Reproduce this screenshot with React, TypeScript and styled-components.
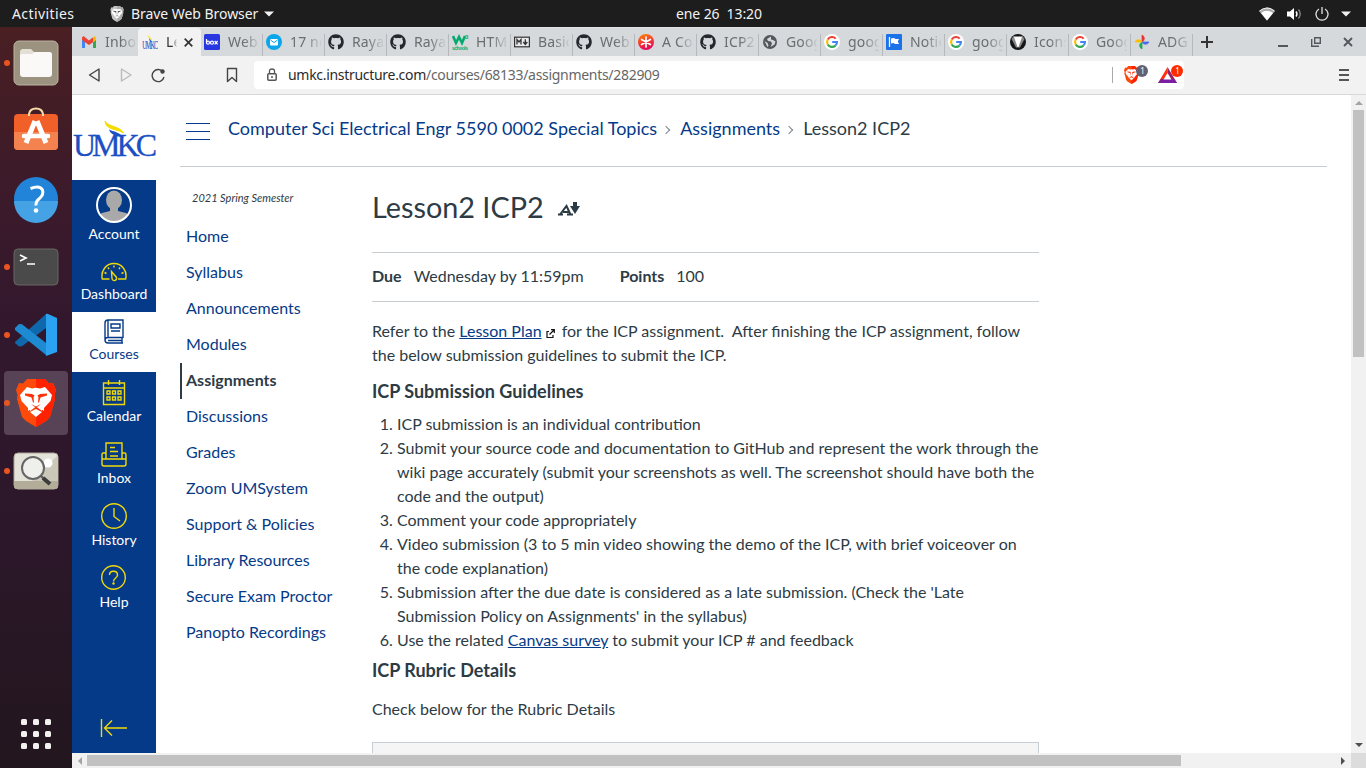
import React from 'react';
import styled, { createGlobalStyle } from 'styled-components';
import { FaGithub } from 'react-icons/fa';

const Global = createGlobalStyle`
  * { box-sizing: border-box; }
  html, body { margin: 0; height: 100%; overflow: hidden; }
  body { font-family: Lato, "Liberation Sans", sans-serif; color: #2d3b45; font-size: 16px; line-height: 24px; }
  svg { display: block; flex: none; }
`;

const Desktop = styled.div`
  width: 1366px; height: 768px; display: flex; flex-direction: column; overflow: hidden; background: #fff;
`;
const TopBar = styled.header`
  height: 27px; flex: none; background: #1d1d1d; color: #f2f2f2; display: flex; align-items: center;
  font: 14px/27px "Noto Sans", sans-serif; white-space: pre;
`;
const BarText = styled.span<{ $w: number; $ml: number; $ls?: number }>`
  width: ${p => p.$w}px; margin-left: ${p => p.$ml}px; letter-spacing: ${p => p.$ls ?? 0}px; flex: none;
`;
const Tray = styled.div`
  display: flex; align-items: center; margin-left: auto; gap: 12px; padding-right: 15px;
`;
const Body = styled.div`display: flex; flex: 1; min-height: 0;`;

const Dock = styled.aside`
  width: 72px; flex: none; display: flex; flex-direction: column; padding: 4px 4px 0;
  background: linear-gradient(#491f22 0, #3b1a2b 180px, #33182d 290px, #2c172a 500px, #22161e 741px);
`;
const DockItem = styled.div<{ $active?: boolean }>`
  height: 64px; margin: 0 0 4px; flex: none; border-radius: 4px; display: flex; align-items: center;
  background: ${p => (p.$active ? '#574355' : 'transparent')};
`;
const Dot = styled.i<{ $on?: boolean }>`
  width: 6px; height: 6px; border-radius: 3px; background: ${p => (p.$on ? '#e95420' : 'transparent')};
  margin-right: 2px; flex: none;
`;
const AppGrid = styled.div`
  margin: auto auto 19px; display: grid; grid-template-columns: repeat(3, 6px); gap: 6px;
  i { height: 6px; border-radius: 1.5px; background: #f3f1ef; }
`;

const Browser = styled.main`flex: 1; min-width: 0; display: flex; flex-direction: column;`;
const TabStrip = styled.div`
  height: 29px; flex: none; background: #d5d9dc; display: flex; align-items: stretch; padding-left: 6px; border-top: 1px solid #e0e3e5;
`;
const Tab = styled.div<{ $w: number; $active?: boolean; $line?: boolean }>`
  width: ${p => p.$w}px; flex: none; display: flex; align-items: center; position: relative;
  padding-left: ${p => (p.$active ? 4 : 3)}px;
  background: ${p => (p.$active ? '#f2f2f2' : 'transparent')}; border-radius: 4px 4px 0 0;
  &::after { content: ''; position: absolute; right: 0; top: 6px; bottom: 0; width: 1px; background: ${p => (p.$line ? '#b5b9bc' : 'transparent')}; }
`;
const TabIcon = styled.span`width: 16px; height: 16px; flex: none; display: flex; align-items: center; justify-content: center;`;
const TabTitle = styled.span<{ $active?: boolean }>`
  margin-left: 8px; width: ${p => (p.$active ? 11 : 31)}px; overflow: hidden; white-space: nowrap; font: 14px/20px "Noto Sans", sans-serif;
  letter-spacing: 0.15px; color: ${p => (p.$active ? '#333' : '#6b6d70')};
  mask-image: linear-gradient(90deg, #000 50%, transparent 105%);
`;
const CloseMark = styled.svg`margin-left: 7px;`;
const NewTab = styled.svg`margin: 8px 0 0 8px;`;
const WindowButtons = styled.div`margin-left: auto; padding-right: 13px; display: flex; align-items: center; gap: 22.5px;`;
const Toolbar = styled.div`
  height: 39px; flex: none; background: #f2f2f2; border-bottom: 1px solid #d5d9dc; display: flex; align-items: center;
  justify-content: space-between; padding: 0 17px 0 15px;
`;
const AddressGroup = styled.div`display: flex; align-items: center; gap: 11px;`;
const Address = styled.div`
  width: 930px; height: 28px; border-radius: 4px; background: #fff; display: flex; align-items: center;
  padding-left: 12px; color: #666; font: 14px/28px "Noto Sans", sans-serif; letter-spacing: -0.3px;
  b { font-weight: 400; color: #2b2b2b; }
`;
const Url = styled.span`margin-left: 10px; flex: 1; white-space: nowrap;`;
const Shields = styled.div`height: 28px; display: flex; align-items: center; gap: 10px; padding-right: 0;`;
const Rule = styled.i`width: 1px; height: 16px; background: #aaa; margin-right: 1px;`;

const Viewport = styled.div`flex: 1; min-height: 0; display: grid; grid-template: minmax(0, 1fr) 15px / minmax(0, 1fr) 15px;`;
const Page = styled.div`display: flex; overflow: hidden; min-height: 0; background: #fff;`;
const GlobalNav = styled.nav`width: 84px; flex: none; background: #053a88; display: flex; flex-direction: column; color: #fff;`;
const LogoBox = styled.div`height: 85px; flex: none; background: #fff; padding-top: 25px;`;
const NavItem = styled.a<{ $h: number; $active?: boolean }>`
  height: ${p => p.$h}px; flex: none; display: flex; flex-direction: column; align-items: center; justify-content: flex-end;
  font-size: 14px; line-height: 18px; padding-bottom: 9px; gap: 1px;
  color: ${p => (p.$active ? '#053a88' : '#fff')}; background: ${p => (p.$active ? '#fff' : 'transparent')};
  svg { color: ${p => (p.$active ? '#053a88' : '#f0d90a')}; }
`;
const Collapse = styled.div`margin: auto auto 15px 28px; color: #f0d90a;`;

const Content = styled.div`flex: 1; min-width: 0; padding: 0 24px;`;
const Crumbs = styled.div`
  height: 72px; border-bottom: 1px solid #c7cdd1; display: flex; align-items: center; padding: 0 0 6px 6px;
  font-size: 18px; white-space: nowrap; color: #2d3b45;
  a { color: #053a88; }
`;
const Burger = styled.div`
  width: 24px; height: 17px; margin: 8px 18px 0 0; border: solid #053a88; border-width: 1px 0; display: flex; align-items: center;
  &::before { content: ''; flex: 1; height: 1px; background: #053a88; }
`;
const Chevron = styled.i`
  width: 6px; height: 6px; border: solid #7b858c; border-width: 1px 1px 0 0; transform: rotate(45deg); margin: 5px 11px 0 6px;
`;
const Columns = styled.div`display: flex;`;
const CourseNav = styled.nav`width: 192px; flex: none; padding-top: 22px;`;
const Term = styled.div`font-size: 11px; font-style: italic; line-height: 18px; padding-left: 12px; margin-bottom: 15px;`;
const CourseLink = styled.a<{ $active?: boolean }>`
  display: block; height: 36px; line-height: 28px; padding-left: 6px; color: #053a88;
  ${p => p.$active && 'color: #2d3b45; font-weight: 700; box-shadow: inset 2px 0 #2d3b45; margin: -3px 0 3px; line-height: 34px;'}
`;
const Article = styled.article`width: 667px; flex: none;`;
const Title = styled.h1`
  margin: 0; height: 85px; padding-top: 21px; font-size: 28.8px; line-height: 38px; font-weight: 400; display: flex; gap: 14px;
  svg { margin-top: 14px; }
`;
const Details = styled.div`
  height: 50px; border: solid #c7cdd1; border-width: 1px 0; display: flex; align-items: center; line-height: 24px; padding-bottom: 2px;
  b { margin-right: 12px; }
  span { margin-right: 36px; }
`;
const Para = styled.p<{ $mt: number }>`
  margin: ${p => p.$mt}px 0 0; white-space: nowrap;
  a { color: #053a88; text-decoration: underline; }
  svg { display: inline-block; margin: 0 3px 0 4px; vertical-align: -1px; }
`;
const Heading = styled.h2<{ $mt: number }>`margin: ${p => p.$mt}px 0 0; font-size: 18px; line-height: 24px; font-weight: 700;`;
const Steps = styled.ol`
  margin: 9px 0 0; padding: 0 0 0 25px; white-space: nowrap;
  a { color: #053a88; text-decoration: underline; }
`;
const RubricBox = styled.div`margin-top: 21px; height: 60px; border: 1px solid #c7cdd1; background: #f5f5f5;`;

const VScroll = styled.div`background: #f1f1f1; display: flex; flex-direction: column; align-items: center; justify-content: space-between; padding: 4px 0;`;
const VThumb = styled.i`width: 11px; height: 247px; background: #c1c1c1; margin-top: 3px; margin-bottom: auto;`;
const HScroll = styled.div`background: #f1f1f1; display: flex; align-items: center; justify-content: space-between; padding: 0 4px;`;
const HThumb = styled.i`width: 1094px; height: 11px; background: #c1c1c1; margin-left: 3px; margin-right: auto;`;
const Corner = styled.i`background: #dcdcdc;`;

const Arrow = ({ d, c = '#505050' }: { d: string; c?: string }) => (
  <svg width="8" height="8" viewBox="0 0 8 8"><path d={d} fill={c} /></svg>
);

const Lion = ({ w, h, mono }: { w: number; h: number; mono?: boolean }) => {
  const ink = mono ? '#555' : '#fc3209';
  return (
    <svg width={w} height={h} viewBox="0 0 40 48">
      <path d="M11 0h18l4 4.500 4-.5 3 7-1.500 5 .5 4-5 18-4 4-10 6-10-6-4-4-5-18 .5-4L0 11l3-7 4 .5z" fill={mono ? '#c4c4c4' : '#fd4a0b'} />
      <path d="M20 0h9l4 4.500 4-.5 3 7-1.500 5 .5 4-5 18-4 4-10 6z" fill={mono ? '#aaa' : '#ff2200'} />
      <path d="M11 8l5 1.500 4-.8 4 .8L29 8l7 8-1.500 6-6.500 7 0 3-8-5-8 5 0-3-6.500-7L4 16z" fill="#fff" />
      <path d="M9 14.500l7 .5 2.500 1.500-1 2 .5 5h-1l-1.500-5L9 16.500zM31 14.500l-7 .5-2.500 1.500 1 2-.5 5h1l1.500-5L31 16.500zM15 25l5 2.500 5-2.500-5 4zM19 27h2v4h-2z" fill={ink} />
      <path d="M20 27.500l-6 4.500 0-3zM20 27.500l6 4.500 0-3z" fill="#fff" />
      <path d="M14 33l6-3 6 3-6 5z" fill="#fff" />
    </svg>
  );
};

const Umkc = ({ w, h }: { w: number; h: number }) => (
  <svg width={w} height={h} viewBox="0 0 84 38" preserveAspectRatio="none">
    <g fontFamily="Liberation Serif, serif" fontSize="32" fill="#1b4fc4" stroke="#1b4fc4" strokeWidth=".3">
      <text x="1" y="36" textLength="84" lengthAdjust="spacing">UMKC</text>
    </g>
    <path d="M33 1c3 6 15 5 18.500 12C45 8.500 34 10.500 33 1z" fill="#f5dc00" stroke="#f5dc00" />
    <path d="M37 9.500c4 2 12 3 15 8.500-6-3-13-1.500-15-8.500z" fill="#1b4fc4" />
  </svg>
);

const Google = () => (
  <svg width="16" height="16" viewBox="0 0 16 16"><circle cx="8" cy="8" r="8" fill="#fff" />
    <g fill="none" strokeWidth="2.1">
      <path d="M11.7 4.600A5 5 0 0 0 3.700 5.600" stroke="#ea4335" /><path d="M3.700 5.600a5 5 0 0 0 0 4.800" stroke="#fbbc05" />
      <path d="M3.700 10.400a5 5 0 0 0 7.700 1.200" stroke="#34a853" /><path d="M11.400 11.600A5 5 0 0 0 13 8H8.200" stroke="#4285f4" />
    </g>
  </svg>
);
const Git = () => <FaGithub size={16} color="#24292e" />;
const Gmail = () => (
  <svg width="16" height="16" viewBox="0 0 16 16">
    <path d="M1 14V4l3 2v8z" fill="#4285f4" /><path d="M15 14V4l-3 2v8z" fill="#34a853" /><path d="M12 3.500l1.500-1.200L15 3v3l-3 2.500z" fill="#fbbc04" />
    <path d="M1 3.500L2.500 2 8 6.500 12 3.300v5L8 11 4 8.200 1 6z" fill="#ea4335" />
  </svg>
);
const Box = () => (
  <svg width="16" height="16" viewBox="0 0 16 16"><rect width="16" height="16" rx="1.500" fill="#2838e0" />
    <path d="M2.500 5v4.200" stroke="#fff" strokeWidth="1.200" /><g fill="none" stroke="#fff" strokeWidth="1.200"><circle cx="4" cy="8.700" r="1.500" /><circle cx="8" cy="8.700" r="1.500" /><path d="M10.600 7l3 3.400M13.600 7l-3 3.400" /></g></svg>
);
const Mail = () => (
  <svg width="16" height="16" viewBox="0 0 16 16"><circle cx="8" cy="8" r="8" fill="#0ba5e9" /><rect x="4" y="5" width="8" height="6.400" rx="1" fill="#fff" /><path d="M4.500 6L8 8.600 11.500 6" stroke="#0ba5e9" fill="none" /></svg>
);
const W3 = () => (
  <svg width="17" height="17" viewBox="0 0 17 17"><path d="M1 2l3 7 3-6 3 6 3-7" fill="none" stroke="#04aa6d" strokeWidth="2.600" />
    <text x="13" y="5" fontSize="6" fontWeight="700" fill="#04aa6d" fontFamily="Liberation Sans">3</text>
    <text x="0" y="16" fontSize="5" fontWeight="700" fill="#04aa6d" fontFamily="Liberation Sans" textLength="16">schools</text></svg>
);
const Markdown = () => (
  <svg width="16" height="12" viewBox="0 0 16 12"><rect x=".6" y="1.200" width="14.800" height="9.600" fill="#e9ebec" stroke="#333" strokeWidth="1.200" /><path d="M3 8.500v-5l2 2.500 2-2.500v5M11.300 3.200v5M9.300 6l2 2.400 2-2.400" fill="none" stroke="#333" strokeWidth="1.300" /></svg>
);
const Aster = () => (
  <svg width="16" height="16" viewBox="0 0 16 16"><defs><linearGradient id="as" x2=".3" y2="1"><stop stopColor="#ff8a00" /><stop offset=".5" stopColor="#f5412c" /><stop offset="1" stopColor="#e5095a" /></linearGradient></defs>
    <circle cx="8" cy="8" r="8" fill="url(#as)" /><path d="M8 3v10M3.600 5.500l8.800 5M12.400 5.500l-8.800 5" stroke="#fff" strokeWidth="1.700" strokeLinecap="round" /></svg>
);
const Globe = () => (
  <svg width="16" height="16" viewBox="0 0 16 16"><circle cx="8" cy="8" r="7" fill="#54585c" /><path d="M9 2.500l-4 2.500 1 2 3 .5 1 2-1.500 3.500 4-2.500 1-3-2.500-1.500-2-.5zM2.500 7l3 2 1 2.500-1 1.500z" fill="#d5d9dc" /></svg>
);
const Flag = () => (
  <svg width="16" height="16" viewBox="0 0 16 16"><rect width="16" height="16" rx="1" fill="#1a73e8" /><path d="M3.500 3v10" stroke="#fff" strokeWidth="1.300" /><path d="M5 4.500l3-.5 1.500 1H13l-1.200 2.500L13 10H9L7.500 9 5 9.500z" fill="#fff" /></svg>
);
const Vee = () => (
  <svg width="16" height="16" viewBox="0 0 16 16"><circle cx="8" cy="8" r="8" fill="#161616" /><path d="M3.500 2h9L14.500 5l-4.500 8.500H6L1.500 5z" fill="#888" /><path d="M4 3h8l-3.500 10h-1z" fill="#fff" /></svg>
);
const Photos = () => (
  <svg width="16" height="16" viewBox="0 0 16 16"><path d="M8 8V1a3.800 3.800 0 0 1 0 7z" fill="#ea3335" stroke="#ea3335" strokeWidth=".8" /><path d="M8 8h7a3.800 3.800 0 0 1-7 0z" fill="#4a6cf0" stroke="#4a6cf0" strokeWidth=".8" /><path d="M8 8v7a3.800 3.800 0 0 1 0-7z" fill="#20a955" stroke="#20a955" strokeWidth=".8" /><path d="M8 8H1a3.800 3.800 0 0 1 7 0z" fill="#fbbc04" stroke="#fbbc04" strokeWidth=".8" /></svg>
);

const tabs: { t: string; i: React.ReactNode; w?: number; active?: boolean }[] = [
  { t: 'Inbox', i: <Gmail />, w: 60 },
  { t: 'Lesson', i: <Umkc w={16} h={15} />, w: 63, active: true },
  { t: 'Web', i: <Box /> },
  { t: '17 new', i: <Mail /> },
  { t: 'Rayap', i: <Git /> },
  { t: 'Rayap', i: <Git /> },
  { t: 'HTML', i: <W3 /> },
  { t: 'Basic', i: <Markdown /> },
  { t: 'Web', i: <Git /> },
  { t: 'A Col', i: <Aster /> },
  { t: 'ICP2', i: <Git /> },
  { t: 'Goog', i: <Globe /> },
  { t: 'goog', i: <Google /> },
  { t: 'Notic', i: <Flag /> },
  { t: 'goog', i: <Google /> },
  { t: 'Icons', i: <Vee /> },
  { t: 'Goog', i: <Google /> },
  { t: 'ADG', i: <Photos /> },
];

const dock: { i: React.ReactNode; on?: boolean; active?: boolean }[] = [
  { on: true, i: <svg width="48" height="48" viewBox="0 0 48 48"><rect x="2" y="2" width="44" height="44" rx="5" fill="#9b937f" stroke="#bbb4a2" /><path d="M8 13q0-3 3-3h8l3 3h15q3 0 3 3v5H8z" fill="#e3dfd5" /><path d="M8 17q0-2 2-2h10l3-2h14q3 0 3 3v19q0 3-3 3H11q-3 0-3-3z" fill="#faf9f8" /></svg> },
  { i: <svg width="48" height="48" viewBox="0 0 48 48"><rect x="2" y="7" width="44" height="36" rx="4" fill="#f2602a" /><path d="M2 25h44v14q0 4-4 4H6q-4 0-4-4z" fill="#f3824f" /><path d="M17 9V7q1-5.500 7-5.500T31 7v2" fill="none" stroke="#f7dba8" strokeWidth="2" /><path d="M23 14L14 36M25 14l9 22" stroke="#fff" strokeWidth="5" fill="none" /><path d="M12 29h24" stroke="#fff" strokeWidth="4.500" strokeLinecap="round" /></svg> },
  { i: <svg width="48" height="48" viewBox="0 0 48 48"><circle cx="24" cy="24" r="22" fill="#2284d8" /><path d="M2 26h44a22 22 0 0 1-44 0z" fill="#45a3e5" /><path d="M18.500 13.500q9.500-3.500 12 1.500 1.500 4.500-3 8.500-4 3-3.500 7" fill="none" stroke="#fff" strokeWidth="3" /><circle cx="24" cy="35.500" r="2.300" fill="#fff" /></svg> },
  { on: true, i: <svg width="48" height="48" viewBox="0 0 48 48"><rect x="2" y="6" width="44" height="36" rx="4" fill="#4a4a4a" stroke="#686662" /><path d="M8 12l6 3-6 3M15 21h8" fill="none" stroke="#fff" strokeWidth="1.700" /></svg> },
  { on: true, i: <svg width="48" height="48" viewBox="0 0 48 48"><path d="M34 3L3 31v1l4 3.500 3-.3L34 17z" fill="#0f68ab" /><path d="M3 17l4-4 3 .3 24 18.700v12L3 19z" fill="#1e8ad1" /><path d="M34 3q1-.5 2 0l9 4v34l-11 4z" fill="#2aa2f0" /></svg> },
  { on: true, active: true, i: <svg width="48" height="48" viewBox="-4 0 48 48"><Lion w={40} h={48} /></svg> },
  { on: true, i: <svg width="48" height="48" viewBox="0 0 48 48"><rect x="2" y="6" width="44" height="36" rx="4" fill="#e4e3da" stroke="#aaa798" /><path d="M20 34L46 8v26z" fill="#cbc8ba" /><path d="M2 34h44v5q0 3-3 3H5q-3 0-3-3z" fill="#b3ac98" /><circle cx="36" cy="16" r="4.500" fill="#fff" /><circle cx="21" cy="21" r="11" fill="#f1f1ee" fillOpacity=".85" stroke="#666" strokeWidth="2" /><path d="M29 29l3 3" stroke="#555" strokeWidth="2" /><path d="M31 31l7 6" stroke="#3c3c3c" strokeWidth="4" /></svg> },
];

const stroke = { fill: 'none', stroke: 'currentColor', strokeWidth: 1.4 };
const navItems: { t: string; h: number; active?: boolean; i: React.ReactNode }[] = [
  { t: 'Account', h: 72, i: <svg width="36" height="37" viewBox="0 0 36 37"><defs><clipPath id="av"><circle cx="18" cy="18" r="17" /></clipPath></defs><circle cx="18" cy="18" r="17" fill="#053a88" /><g clipPath="url(#av)" fill="#a9a9a9"><ellipse cx="18" cy="13" rx="8" ry="9.500" /><path d="M14 20h8v4l8 2 4 3v8H2v-8l4-3 8-2z" /></g><circle cx="18" cy="18" r="17" fill="none" stroke="#fff" strokeWidth="2" /></svg> },
  { t: 'Dashboard', h: 60, i: <svg width="26" height="22" viewBox="0 0 26 22"><g {...stroke}><path d="M8.500 17H1.300C-.5 9 5 1.500 13 1.500S26.500 9 24.700 17H17" /><path d="M10.500 9.500l4.700 5.500a2.300 2.300 0 1 1-4.200 1.500z" /><path d="M13 3.500v2M7 5.500l1 1.500M19 5.500l-1 1.500M3.500 10.500l2 1M22.500 10.500l-2 1" /></g></svg> },
  { t: 'Courses', h: 60, active: true, i: <svg width="20" height="25" viewBox="0 0 20 25"><g {...stroke}><path d="M19 19V1H4Q1 1 1 4v17q0 3 3 3h15M1 21q0-2.500 3-2.500h15M4 1v17M4 21.500h14M7 5h9v4H7zM7 12h9M18 19v5" /></g></svg> },
  { t: 'Calendar', h: 62, i: <svg width="24" height="27" viewBox="0 0 24 27"><g {...stroke}><path d="M1.500 4h21v21.500h-21zM1.500 9h21M6.500 1v5M17.500 1v5" /><path d="M5 12h3v3H5zM10.500 12h3v3h-3zM16 12h3v3h-3zM5 18h3v3H5zM10.500 18h3v3h-3zM16 18h3v3h-3z" /></g></svg> },
  { t: 'Inbox', h: 62, i: <svg width="26" height="26" viewBox="0 0 26 26"><g {...stroke}><path d="M5 17V1h16v16M5 11H2q-1 0-1 2v9q0 2 2 2h20q2 0 2-2v-9q0-2-1-2h-3M1 17h24M9 5.500h5M9 9.500h8M9 14h8" /></g></svg> },
  { t: 'History', h: 62, i: <svg width="26" height="27" viewBox="0 0 26 27"><g {...stroke}><circle cx="13" cy="13" r="12.300" /><path d="M13 5v8.500l6 4.500" /></g></svg> },
  { t: 'Help', h: 62, i: <svg width="26" height="27" viewBox="0 0 26 27"><g {...stroke}><circle cx="12.500" cy="12.500" r="11.800" /><path d="M8.500 10c0-5 8-5 8 0 0 3-4 3-4 6.500" /></g><circle cx="12.500" cy="18.500" r="1.200" fill="currentColor" /></svg> },
];

const links = ['Home', 'Syllabus', 'Announcements', 'Modules', 'Assignments', 'Discussions', 'Grades', 'Zoom UMSystem', 'Support & Policies', 'Library Resources', 'Secure Exam Proctor', 'Panopto Recordings'];

export default function App() {
  return (
    <Desktop>
      <Global />
      <TopBar>
        <BarText $w={88} $ml={12} $ls={0.4}>Activities</BarText>
        <svg width="34" height="16" viewBox="-10 0 34 16"><Lion w={14} h={16} mono /></svg>
        <BarText $w={128} $ml={-3} $ls={-0.05}>Brave Web Browser</BarText>
        <svg width="15" height="6" viewBox="-5 0 15 6"><path d="M0 .5h10L5 5.500z" fill="#f2f2f2" /></svg>
        <BarText $w={100} $ml={402} $ls={-0.1}>ene 26  13:20</BarText>
        <Tray>
          <svg width="16" height="14" viewBox="0 0 16 14"><path d="M0 4q8-7 16 0L8 13.500z" fill="#aaa" /><path d="M2 6q6-4.500 12 0L8 13.500z" fill="#fff" /><path d="M.5 4q7.500-6 15 0" fill="none" stroke="#eee" /></svg>
          <svg width="16" height="14" viewBox="0 0 16 14"><path d="M0 4.500h3L7 1v12L3 9.500H0z" fill="#fff" /><path d="M9 4.500q2 2.500 0 5" stroke="#fff" strokeWidth="1.400" fill="none" /><path d="M11.500 2.500q3.500 4.500 0 9" stroke="#888" strokeWidth="1.300" fill="none" /></svg>
          <svg width="14" height="14" viewBox="0 0 14 14"><path d="M4 2a6 6 0 1 0 6 0M7 0v7" stroke="#e4e4e4" strokeWidth="1.300" fill="none" /></svg>
          <svg width="10" height="6" viewBox="0 0 10 6"><path d="M0 .5h10L5 5.500z" fill="#f2f2f2" /></svg>
        </Tray>
      </TopBar>
      <Body>
        <Dock>
          {dock.map((d, k) => <DockItem key={k} $active={d.active}><Dot $on={d.on} />{d.i}</DockItem>)}
          <AppGrid>{Array.from({ length: 9 }, (_, k) => <i key={k} />)}</AppGrid>
        </Dock>
        <Browser>
          <TabStrip>
            {tabs.map((t, k) => (
              <Tab key={k} $w={t.w ?? 62} $active={t.active} $line={k > 1}>
                <TabIcon>{t.i}</TabIcon><TabTitle $active={t.active}>{t.t}</TabTitle>
                {t.active && <CloseMark width="9" height="9" viewBox="0 0 9 9"><path d="M.7.7l7.600 7.600M8.300.7L.7 8.300" stroke="#333" strokeWidth="1.700" /></CloseMark>}
              </Tab>
            ))}
            <NewTab width="12" height="12" viewBox="0 0 12 12"><path d="M6 0v12M0 6h12" stroke="#333" strokeWidth="2" /></NewTab>
            <WindowButtons>
              <svg width="10" height="10" viewBox="0 0 10 10"><path d="M0 9h10" stroke="#54585c" strokeWidth="2" /></svg>
              <svg width="10" height="10" viewBox="0 0 10 10"><path d="M3.700.7h5.600v5.600H3.700zM.7 2v7.300H8" stroke="#54585c" strokeWidth="1.400" fill="none" /></svg>
              <svg width="10" height="10" viewBox="0 0 10 10"><path d="M1 1l8 8M9 1L1 9" stroke="#54585c" strokeWidth="1.900" /></svg>
            </WindowButtons>
          </TabStrip>
          <Toolbar>
            <AddressGroup>
              <svg width="156" height="16" viewBox="0 0 156 16"><g fill="none" strokeWidth="1.400" strokeLinejoin="round">
                <path d="M12 2v12L2.500 8z" stroke="#444" /><path d="M34.500 2v12L44 8z" stroke="#bbb" />
                <path d="M76 5a6 6 0 1 0 1 5" stroke="#444" /><path d="M140.500 1.500h9v13l-4.500-4-4.500 4z" stroke="#444" />
              </g><circle cx="75.500" cy="4.500" r="2.200" fill="#444" /></svg>
              <Address>
                <svg width="12" height="14" viewBox="0 0 12 14"><rect x="1.800" y="5.700" width="8.400" height="6.600" rx="1" fill="none" stroke="#555" strokeWidth="1.500" /><path d="M3.500 5.500V3q0-2 2.500-2t2.500 2v2.500" fill="none" stroke="#555" strokeWidth="1.300" /><circle cx="6" cy="9" r="1" fill="#555" /></svg>
                <Url><b>umkc.instructure.com</b>/courses/68133/assignments/282909</Url>
                <Shields>
                  <Rule />
                  <svg width="24" height="20" viewBox="0 0 24 20"><svg y="1" width="16" height="18"><Lion w={15} h={18} /></svg><circle cx="18" cy="6" r="6" fill="#636073" /><text x="16.300" y="9" fontSize="8" fill="#fff">1</text></svg>
                  <svg width="26" height="20" viewBox="0 0 26 20"><path d="M9.500 2L0 18h9z" fill="#ff3010" /><path d="M9.500 2L19 18H9z" fill="#9e1f63" /><path d="M0 18l3-4h13l3 4z" fill="#7b1fa2" /><path d="M9.500 8l4 6.500h-8z" fill="#fff" /><circle cx="19" cy="6" r="6" fill="#ff2b00" /><text x="17.300" y="9" fontSize="8" fill="#fff">1</text></svg>
                </Shields>
              </Address>
            </AddressGroup>
            <svg width="10" height="12" viewBox="0 0 10 12"><path d="M0 1h10M0 6h10M0 11h10" stroke="#555" strokeWidth="1.800" /></svg>
          </Toolbar>
          <Viewport>
            <Page>
              <GlobalNav>
                <LogoBox><Umkc w={84} h={38} /></LogoBox>
                {navItems.map(n => <NavItem key={n.t} $h={n.h} $active={n.active}>{n.i}<span>{n.t}</span></NavItem>)}
                <Collapse><svg width="27" height="20" viewBox="0 0 27 20"><path d="M1.500 1v18M27 10H5M12 2.500L4.500 10l7.500 7.500" {...stroke} /></svg></Collapse>
              </GlobalNav>
              <Content>
                <Crumbs>
                  <Burger /><a>Computer Sci Electrical Engr 5590 0002 Special Topics</a><Chevron /><a>Assignments</a><Chevron /><span>Lesson2 ICP2</span>
                </Crumbs>
                <Columns>
                  <CourseNav>
                    <Term>2021 Spring Semester</Term>
                    {links.map(l => <CourseLink key={l} $active={l === 'Assignments'}>{l}</CourseLink>)}
                  </CourseNav>
                  <Article>
                    <Title>Lesson2 ICP2<svg width="22" height="14" viewBox="0 0 22 14"><path d="M0 12.500h5M9 12.500h6M2 12.500L8.500 4l4 8.500M5 10h6" stroke="#2d3b45" strokeWidth="2" fill="none" /><path d="M15 0h4v4h3l-5 8-5-8h3z" fill="#2d3b45" /></svg></Title>
                    <Details><b>Due</b><span>Wednesday by 11:59pm</span><b>Points</b><span>100</span></Details>
                    <Para $mt={17}>Refer to the <a>Lesson Plan</a><svg width="9" height="9" viewBox="0 0 9 9"><path d="M3 2.500H1v6h6V6M3.500 5.500L8 1M5 .7h3.300V4" fill="none" stroke="#111" strokeWidth="1.200" /></svg> for the ICP assignment.&nbsp; After finishing the ICP assignment, follow<br />the below submission guidelines to submit the ICP.</Para>
                    <Heading $mt={12}>ICP Submission Guidelines</Heading>
                    <Steps>
                      <li>ICP submission is an individual contribution</li>
                      <li>Submit your source code and documentation to GitHub and represent the work through the<br />wiki page accurately (submit your screenshots as well. The screenshot should have both the<br />code and the output)</li>
                      <li>Comment your code appropriately</li>
                      <li>Video submission (3 to 5 min video showing the demo of the ICP, with brief voiceover on<br />the code explanation)</li>
                      <li>Submission after the due date is considered as a late submission. (Check the 'Late<br />Submission Policy on Assignments' in the syllabus)</li>
                      <li>Use the related <a>Canvas survey</a> to submit your ICP # and feedback</li>
                    </Steps>
                    <Heading $mt={6}>ICP Rubric Details</Heading>
                    <Para $mt={15}>Check below for the Rubric Details</Para>
                    <RubricBox />
                  </Article>
                </Columns>
              </Content>
            </Page>
            <VScroll><Arrow d="M0 6h8L4 2z" c="#a3a3a3" /><VThumb /><Arrow d="M0 2h8L4 6z" /></VScroll>
            <HScroll><Arrow d="M6 0v8L2 4z" c="#a3a3a3" /><HThumb /><Arrow d="M2 0v8l4-4z" /></HScroll>
            <Corner />
          </Viewport>
        </Browser>
      </Body>
    </Desktop>
  );
}
